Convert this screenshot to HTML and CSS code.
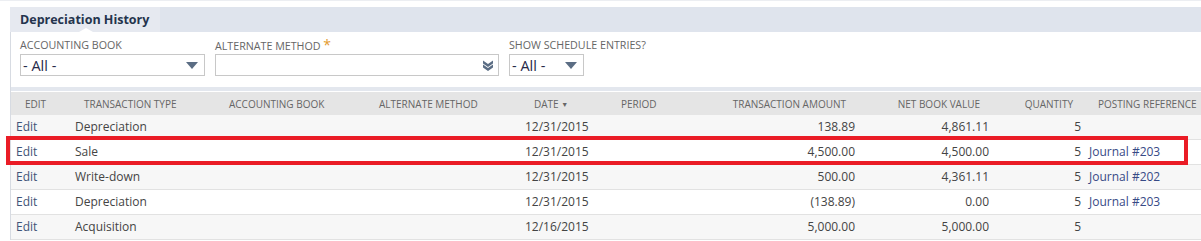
FILE: index.html
```html
<!DOCTYPE html>
<html>
<head>
<meta charset="utf-8">
<link rel="stylesheet" href="styles.css">
</head>
<body>
<div class="page">
  <div class="topline"></div>
  <div class="tabs">
    <div class="tab">Depreciation History</div>
  </div>
  <div class="panel">
    <span class="notch"></span>
    <div class="filters">
      <div class="field">
        <label class="flabel">Accounting Book</label>
        <div class="select w1"><span>- All -</span>
          <svg class="caret" width="12" height="7" viewBox="0 0 12 7"><path d="M0 0H12L6 7Z" fill="#5b6d84"/></svg>
        </div>
      </div>
      <div class="field">
        <label class="flabel">Alternate Method <span class="req">*</span></label>
        <div class="select w2"><span></span>
          <svg class="dbl" width="10" height="11" viewBox="0 0 10 11"><path d="M0 0.5L5 4L10 0.5V3.5L5 7L0 3.5Z M0 4.5L5 8L10 4.5V7.5L5 11L0 7.5Z" fill="#5b6d84"/></svg>
        </div>
      </div>
      <div class="field">
        <label class="flabel">Show Schedule Entries?</label>
        <div class="select w3"><span>- All -</span>
          <svg class="caret" width="12" height="7" viewBox="0 0 12 7"><path d="M0 0H12L6 7Z" fill="#5b6d84"/></svg>
        </div>
      </div>
    </div>
    <div class="band"></div>
    <table class="grid">
      <colgroup>
        <col style="width:59px"><col style="width:145px"><col style="width:150px"><col style="width:155px"><col style="width:87px"><col style="width:93px"><col style="width:160px"><col style="width:134px"><col style="width:90px"><col>
      </colgroup>
      <thead>
        <tr>
          <th>Edit</th><th>Transaction Type</th><th>Accounting Book</th><th>Alternate Method</th><th>Date <span class="sort">▼</span></th><th>Period</th><th class="r">Transaction Amount</th><th class="r">Net Book Value</th><th class="r q">Quantity</th><th>Posting Reference</th>
        </tr>
      </thead>
      <tbody>
        <tr class="alt"><td class="lnk">Edit</td><td>Depreciation</td><td></td><td></td><td>12/31/2015</td><td></td><td class="r">138.89</td><td class="r">4,861.11</td><td class="r q">5</td><td></td></tr>
        <tr class="hl"><td class="lnk">Edit</td><td>Sale</td><td></td><td></td><td>12/31/2015</td><td></td><td class="r">4,500.00</td><td class="r">4,500.00</td><td class="r q">5</td><td class="lnk2">Journal #203</td></tr>
        <tr class="alt"><td class="lnk">Edit</td><td>Write-down</td><td></td><td></td><td>12/31/2015</td><td></td><td class="r">500.00</td><td class="r">4,361.11</td><td class="r q">5</td><td class="lnk2">Journal #202</td></tr>
        <tr><td class="lnk">Edit</td><td>Depreciation</td><td></td><td></td><td>12/31/2015</td><td></td><td class="r">(138.89)</td><td class="r">0.00</td><td class="r q">5</td><td class="lnk2">Journal #203</td></tr>
        <tr class="alt"><td class="lnk">Edit</td><td>Acquisition</td><td></td><td></td><td>12/16/2015</td><td></td><td class="r">5,000.00</td><td class="r">5,000.00</td><td class="r q">5</td><td></td></tr>
      </tbody>
    </table>
    <div class="redbox"></div>
  </div>
</div>
</body>
</html>
```

FILE: styles.css
```css
html, body {
  margin: 0;
  padding: 0;
  background: #ffffff;
}
body {
  font-family: "Open Sans", "Liberation Sans", sans-serif;
  color: #333333;
  width: 1201px;
  height: 241px;
  overflow: hidden;
}
.topline {
  height: 1px;
  background: #eceef2;
}
.tabs {
  margin-top: 6px;
  margin-left: 10px;
  height: 25px;
  background: #dfe4ed;
  display: flex;
}
.tab {
  width: 150px;
  box-sizing: border-box;
  padding-left: 10px;
  background: #e6e9f0;
  font-size: 12.5px;
  font-weight: 700;
  color: #24344d;
  line-height: 25px;
  white-space: nowrap;
}
.panel {
  position: relative;
  margin-left: 10px;
  border-left: 1px solid #d7dbe2;
}
.notch {
  position: absolute;
  left: 68px;
  top: -4px;
  width: 0;
  height: 0;
  border-left: 7px solid transparent;
  border-right: 7px solid transparent;
  border-bottom: 4px solid #ffffff;
}
.filters {
  display: flex;
  gap: 10px;
  padding: 6px 0 0 9px;
  height: 49px;
}
.field {
  display: flex;
  flex-direction: column;
}
.flabel {
  font-size: 10.7px;
  line-height: 14px;
  color: #666666;
  text-transform: uppercase;
  height: 16px;
  white-space: nowrap;
}
.req {
  color: #e39a2d;
  font-size: 14px;
}
.select {
  box-sizing: border-box;
  height: 22px;
  border: 1px solid #c8c8c8;
  display: flex;
  align-items: center;
  justify-content: space-between;
  padding: 0 6px 0 2px;
  font-size: 14.5px;
  color: #262a4a;
}
.w1 { width: 185px; }
.w2 { width: 284px; padding-right: 5px; }
.w3 { width: 75px; }
.caret { margin-top: 1px; }
.band {
  height: 4px;
  background: #e3e7ee;
  border-bottom: 1px solid #ffffff;
}
.grid {
  border-collapse: collapse;
  table-layout: fixed;
  width: 1190px;
}
.grid th {
  height: 23px;
  padding: 0 14px;
  background: #e5e5e5;
  font-size: 10px;
  font-weight: 400;
  color: #666666;
  text-transform: uppercase;
  text-align: left;
  white-space: nowrap;
}
.grid th.q { padding-right: 11px; }
.grid th.r, .grid td.r { text-align: right; }
.sort { font-size: 7px; vertical-align: 1px; }
.grid td {
  height: 23px;
  padding: 0 5px 1px;
  font-size: 12px;
  color: #444444;
  border-bottom: 1px solid #e2e2e2;
  white-space: nowrap;
}
.grid td.q { padding-right: 3px; }
.grid tr.alt td { background: #f7f7f7; }
.grid td.lnk { color: #3f5478; }
.grid td.lnk2 { color: #374a86; }
.redbox {
  position: absolute;
  left: -5px;
  top: 104px;
  width: 1174px;
  height: 21px;
  border: 4px solid #ea1c26;
}
```
